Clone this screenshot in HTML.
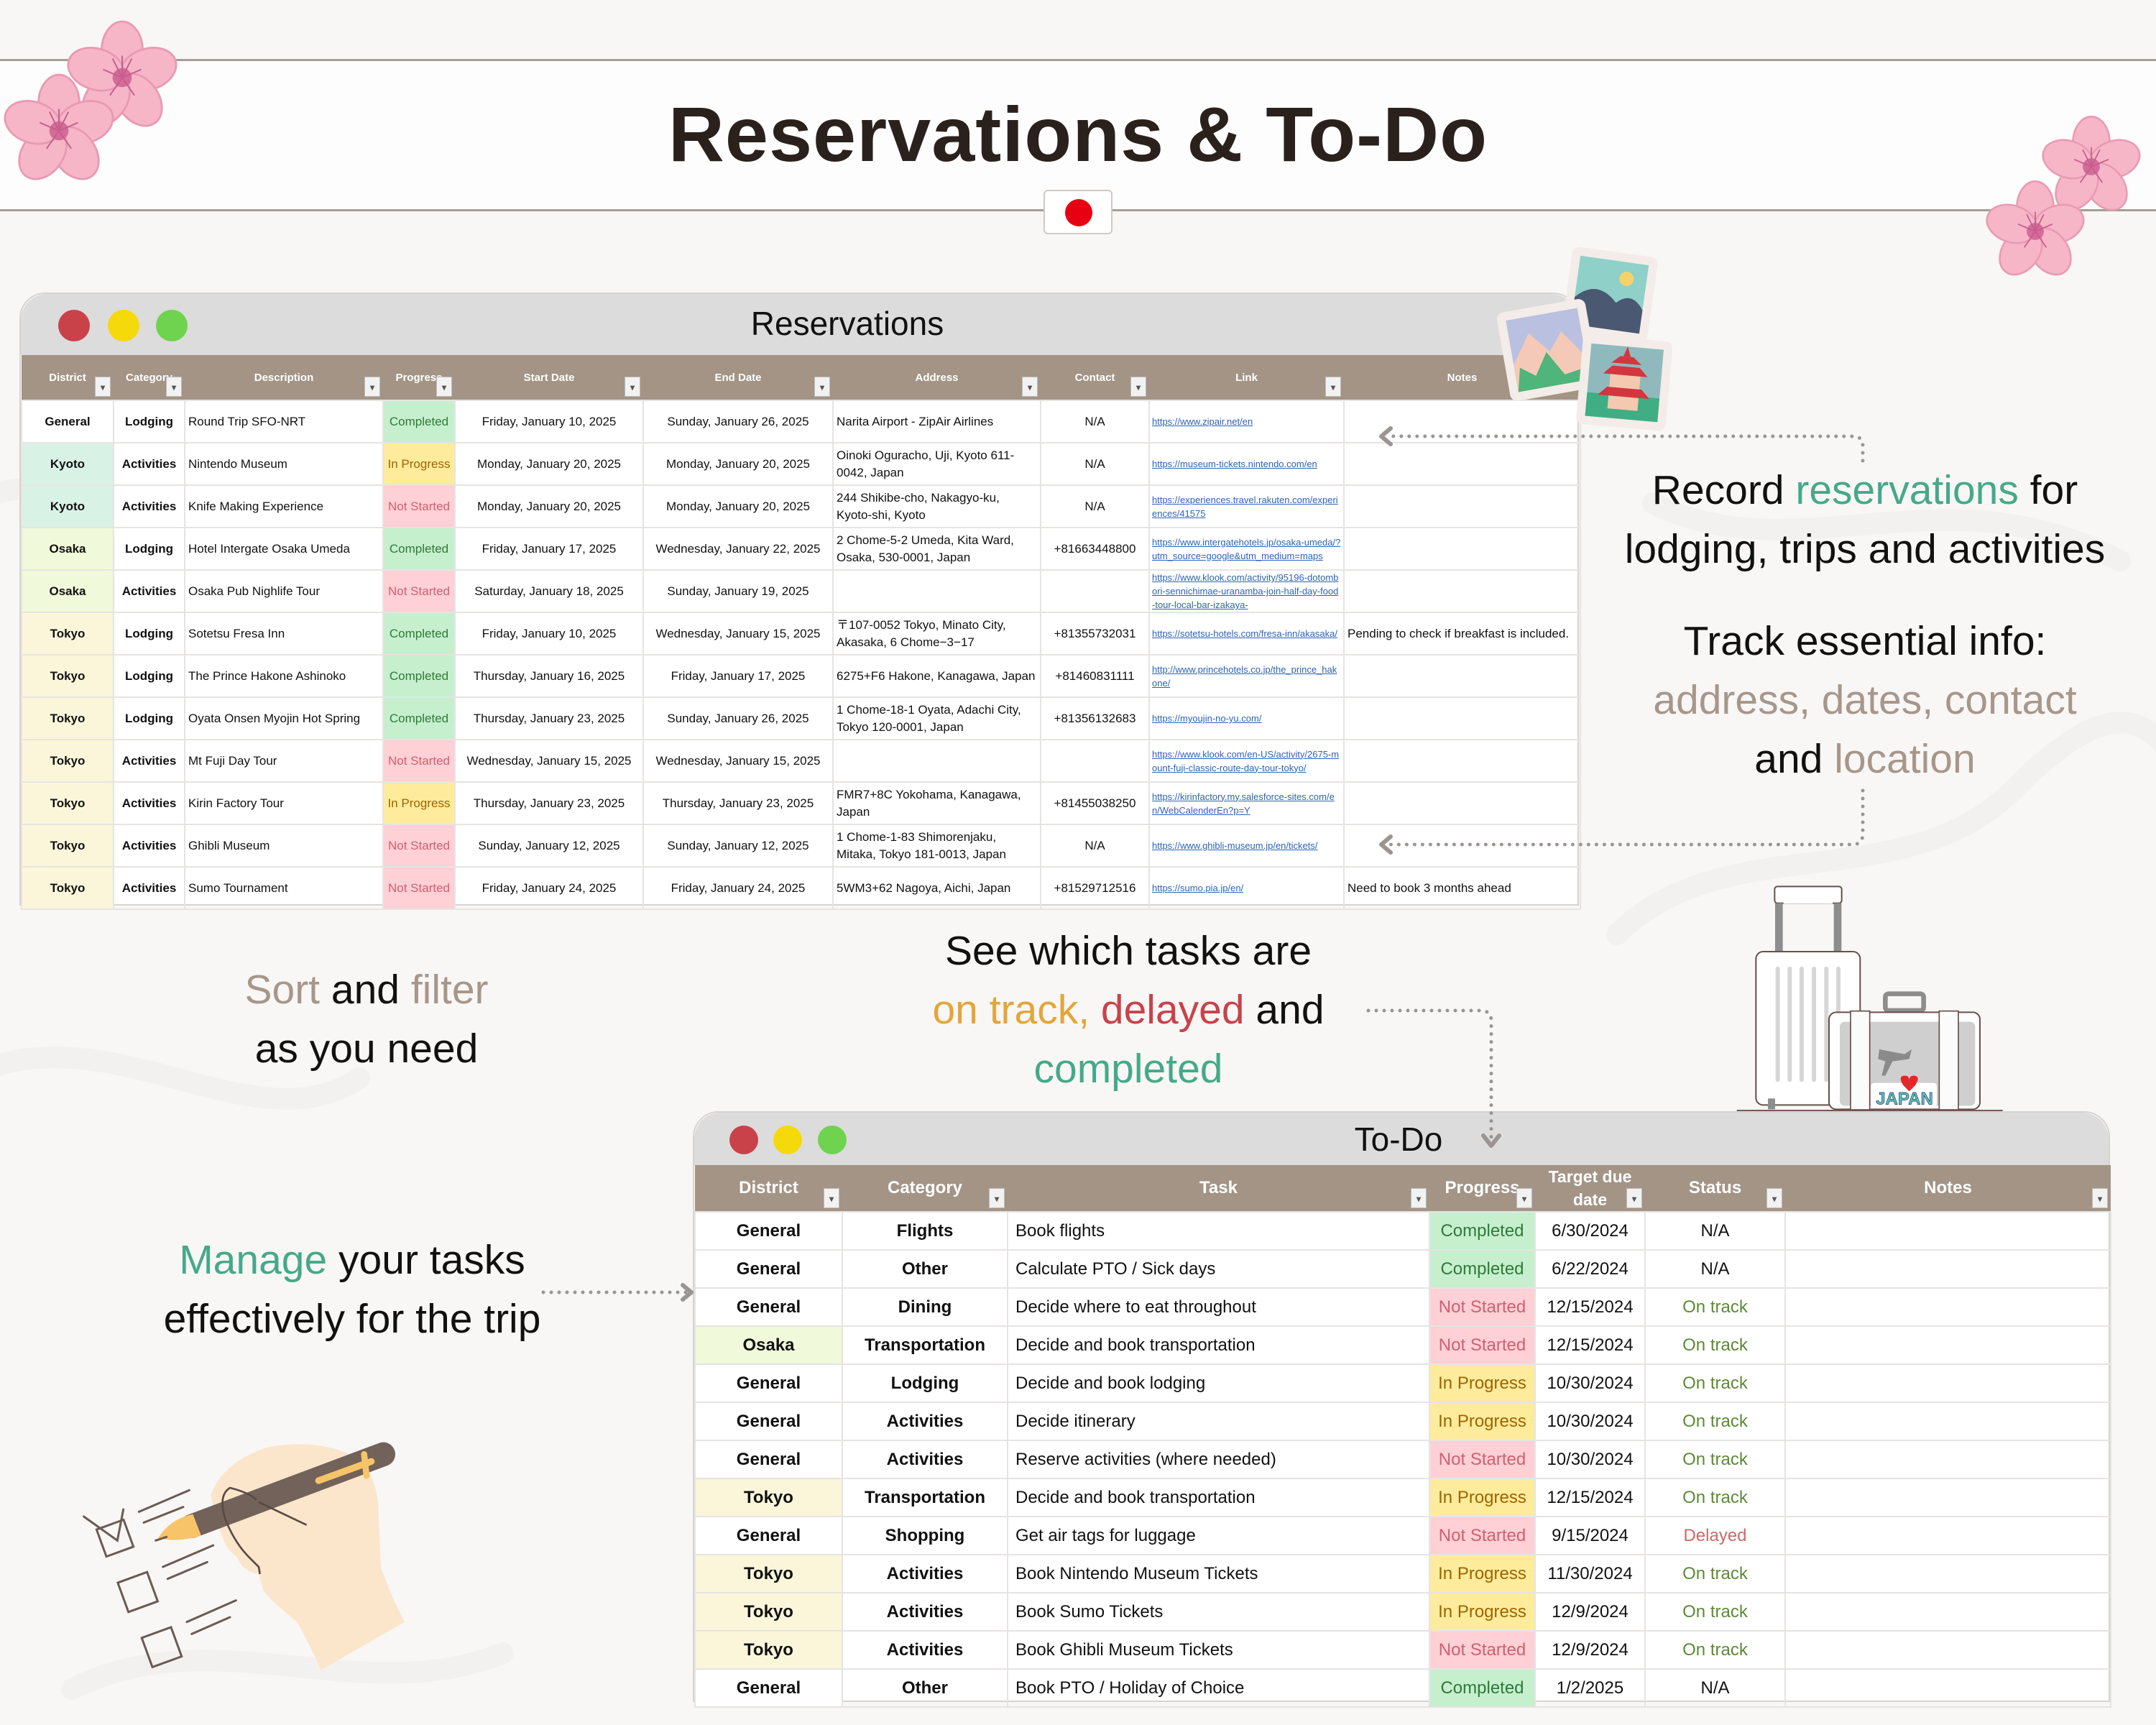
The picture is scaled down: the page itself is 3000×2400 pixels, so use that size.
<!DOCTYPE html>
<html><head><meta charset="utf-8">
<style>
*{margin:0;padding:0;box-sizing:border-box}
body{width:3000px;height:2400px;background:#f8f7f6;font-family:"Liberation Sans","Noto Sans CJK JP",sans-serif;position:relative;overflow:hidden;color:#111}
.band{position:absolute;left:0;top:82px;width:3000px;height:212px;background:#fdfdfd;border-top:3px solid #a59d97;border-bottom:3px solid #a59d97}
.title{position:absolute;left:0;width:3000px;top:124px;text-align:center;font-size:108px;font-weight:bold;color:#2a211d;letter-spacing:1px}
.flag{position:absolute;left:1452px;top:264px;width:96px;height:62px;background:#fff;border:2px solid #cfc8c3;border-radius:6px}
.flag:after{content:"";position:absolute;left:28px;top:11px;width:38px;height:38px;border-radius:50%;background:#e60012}
.win{position:absolute;background:#fff;border:2px solid #d6d3d0}
.bar{position:absolute;left:0;top:0;right:0;background:#dcdcdc;border-radius:36px 36px 0 0}
.dot{position:absolute;border-radius:50%}
.wt{position:absolute;font-weight:normal;color:#111;text-align:center}
table{border-collapse:collapse;table-layout:fixed;position:absolute}
th{background:#a39486;color:#fff;font-weight:bold;position:relative;text-align:center;vertical-align:middle}
th i{position:absolute;right:4px;bottom:4px;width:22px;height:28px;background:#f2f2f2;border:1px solid #bbb;color:#555;font-style:normal;font-size:12px;line-height:28px;text-align:center}
td{border:2px solid #e6e4e2;overflow:hidden;vertical-align:middle}
#res td{font-size:17px;line-height:24px;padding:0 4px}
#res td.c{text-align:center}
#res td.b{font-weight:bold;text-align:center}
#res td.l{font-size:13px;line-height:19px;color:#2d62b8;text-decoration:underline;word-break:break-all;padding:0 3px}
#todo td{font-size:24px;padding:0 10px}
#todo td.c{text-align:center}
#todo td.b{font-weight:bold;text-align:center}
.g{background:#fff}.ky{background:#d9f2e6}.os{background:#f0f9d9}.tk{background:#fbf6da}
.cm{background:#c6efce;color:#2f7a38;text-align:center;padding:0 !important}
.ip{background:#ffeb9c;color:#9c6500;text-align:center;padding:0 !important}
.ns{background:#ffd0d6;color:#d0606e;text-align:center;padding:0 !important}
.ot{color:#5d8a35}.dl{color:#c86a6a}
.txt{position:absolute;text-align:center;font-size:57px;line-height:82px;color:#111}
.gr{color:#45a98a}.tn{color:#a8968a}.yl{color:#e3a63a}.rd{color:#c9424a}
</style></head><body>

<svg width="3000" height="2400" style="position:absolute;left:0;top:0" viewBox="0 0 3000 2400">
<g fill="none" stroke="#f0eeec" stroke-width="30" stroke-linecap="round" opacity="0.7">
<path d="M-50 700 C200 600 300 900 600 800 S900 600 1100 750"/>
<path d="M2250 1300 C2400 1150 2650 1250 2800 1100 S3000 1000 3050 1100"/>
<path d="M-50 1500 C150 1400 350 1600 500 1500"/>
<path d="M100 2350 C300 2250 500 2380 700 2300"/>
<path d="M2300 700 C2500 800 2700 650 2950 780"/>
</g>
</svg>

<div class="band"></div>
<div class="title">Reservations &amp; To-Do</div>
<div class="flag"></div>

<svg width="3000" height="420" style="position:absolute;left:0;top:0" viewBox="0 0 3000 420">
<defs>
<g id="fl">
<g fill="#f6b6c8" stroke="#e99ab2" stroke-width="3">
<ellipse cx="0" cy="-40" rx="30" ry="42"/>
<ellipse cx="0" cy="-40" rx="30" ry="42" transform="rotate(72)"/>
<ellipse cx="0" cy="-40" rx="30" ry="42" transform="rotate(144)"/>
<ellipse cx="0" cy="-40" rx="30" ry="42" transform="rotate(216)"/>
<ellipse cx="0" cy="-40" rx="30" ry="42" transform="rotate(288)"/>
</g>
<circle r="14" fill="#d46c9a"/>
<g stroke="#c45d8c" stroke-width="2"><path d="M0 0L0-32M0 0L28-12M0 0L18 26M0 0L-18 26M0 0L-28-12M0 0L14-28M0 0L-14-28"/></g>
</g>
</defs>
<use href="#fl" transform="translate(170,108) scale(0.95)"/>
<use href="#fl" transform="translate(82,182) scale(0.95)"/>
<use href="#fl" transform="translate(2910,232) scale(0.85)"/>
<use href="#fl" transform="translate(2832,322) scale(0.85)"/>
</svg>

<!-- Reservations window -->
<div class="win" style="left:27px;top:407px;width:2170px;height:853px;border-radius:36px 36px 0 0">
<div class="bar" style="height:85px"></div>
<div class="dot" style="left:52px;top:22px;width:44px;height:44px;background:#c9424a"></div>
<div class="dot" style="left:121px;top:22px;width:44px;height:44px;background:#f5d90a"></div>
<div class="dot" style="left:188px;top:22px;width:44px;height:44px;background:#6fd34f"></div>
<div class="wt" style="left:850px;width:600px;top:14px;font-size:46px">Reservations</div>
<table id="res" style="left:0;top:85px;width:2169px">
<colgroup><col style="width:128px"><col style="width:99px"><col style="width:276px"><col style="width:100px"><col style="width:262px"><col style="width:264px"><col style="width:289px"><col style="width:151px"><col style="width:271px"><col style="width:329px"></colgroup>
<tr style="height:63px"><th style="font-size:15px">District<i>▾</i></th><th style="font-size:15px">Category<i>▾</i></th><th style="font-size:15px">Description<i>▾</i></th><th style="font-size:15px">Progress<i>▾</i></th><th style="font-size:15px">Start Date<i>▾</i></th><th style="font-size:15px">End Date<i>▾</i></th><th style="font-size:15px">Address<i>▾</i></th><th style="font-size:15px">Contact<i>▾</i></th><th style="font-size:15px">Link<i>▾</i></th><th style="font-size:15px">Notes</th></tr>
<tr style="height:59px"><td class="b g">General</td><td class="b">Lodging</td><td>Round Trip SFO-NRT</td><td class="cm">Completed</td><td class="c">Friday, January 10, 2025</td><td class="c">Sunday, January 26, 2025</td><td>Narita Airport - ZipAir Airlines</td><td class="c">N/A</td><td class="l">https://www.zipair.net/en</td><td></td></tr>
<tr style="height:59px"><td class="b ky">Kyoto</td><td class="b">Activities</td><td>Nintendo Museum</td><td class="ip">In Progress</td><td class="c">Monday, January 20, 2025</td><td class="c">Monday, January 20, 2025</td><td>Oinoki Oguracho, Uji, Kyoto 611-0042, Japan</td><td class="c">N/A</td><td class="l">https://museum-tickets.nintendo.com/en</td><td></td></tr>
<tr style="height:59px"><td class="b ky">Kyoto</td><td class="b">Activities</td><td>Knife Making Experience</td><td class="ns">Not Started</td><td class="c">Monday, January 20, 2025</td><td class="c">Monday, January 20, 2025</td><td>244 Shikibe-cho, Nakagyo-ku, Kyoto-shi, Kyoto</td><td class="c">N/A</td><td class="l">https://experiences.travel.rakuten.com/experiences/41575</td><td></td></tr>
<tr style="height:59px"><td class="b os">Osaka</td><td class="b">Lodging</td><td>Hotel Intergate Osaka Umeda</td><td class="cm">Completed</td><td class="c">Friday, January 17, 2025</td><td class="c">Wednesday, January 22, 2025</td><td>2 Chome-5-2 Umeda, Kita Ward, Osaka, 530-0001, Japan</td><td class="c">+81663448800</td><td class="l">https://www.intergatehotels.jp/osaka-umeda/?utm_source=google&amp;utm_medium=maps</td><td></td></tr>
<tr style="height:59px"><td class="b os">Osaka</td><td class="b">Activities</td><td>Osaka Pub Nighlife Tour</td><td class="ns">Not Started</td><td class="c">Saturday, January 18, 2025</td><td class="c">Sunday, January 19, 2025</td><td></td><td></td><td class="l"><div style="height:57px;overflow:hidden">https://www.klook.com/activity/95196-dotombori-sennichimae-uranamba-join-half-day-food-tour-local-bar-izakaya-</div></td><td></td></tr>
<tr style="height:59px"><td class="b tk">Tokyo</td><td class="b">Lodging</td><td>Sotetsu Fresa Inn</td><td class="cm">Completed</td><td class="c">Friday, January 10, 2025</td><td class="c">Wednesday, January 15, 2025</td><td>〒107-0052 Tokyo, Minato City, Akasaka, 6 Chome−3−17</td><td class="c">+81355732031</td><td class="l">https://sotetsu-hotels.com/fresa-inn/akasaka/</td><td>Pending to check if breakfast is included.</td></tr>
<tr style="height:59px"><td class="b tk">Tokyo</td><td class="b">Lodging</td><td>The Prince Hakone Ashinoko</td><td class="cm">Completed</td><td class="c">Thursday, January 16, 2025</td><td class="c">Friday, January 17, 2025</td><td>6275+F6 Hakone, Kanagawa, Japan</td><td class="c">+81460831111</td><td class="l">http://www.princehotels.co.jp/the_prince_hakone/</td><td></td></tr>
<tr style="height:59px"><td class="b tk">Tokyo</td><td class="b">Lodging</td><td>Oyata Onsen Myojin Hot Spring</td><td class="cm">Completed</td><td class="c">Thursday, January 23, 2025</td><td class="c">Sunday, January 26, 2025</td><td>1 Chome-18-1 Oyata, Adachi City, Tokyo 120-0001, Japan</td><td class="c">+81356132683</td><td class="l">https://myoujin-no-yu.com/</td><td></td></tr>
<tr style="height:59px"><td class="b tk">Tokyo</td><td class="b">Activities</td><td>Mt Fuji Day Tour</td><td class="ns">Not Started</td><td class="c">Wednesday, January 15, 2025</td><td class="c">Wednesday, January 15, 2025</td><td></td><td></td><td class="l">https://www.klook.com/en-US/activity/2675-mount-fuji-classic-route-day-tour-tokyo/</td><td></td></tr>
<tr style="height:59px"><td class="b tk">Tokyo</td><td class="b">Activities</td><td>Kirin Factory Tour</td><td class="ip">In Progress</td><td class="c">Thursday, January 23, 2025</td><td class="c">Thursday, January 23, 2025</td><td>FMR7+8C Yokohama, Kanagawa, Japan</td><td class="c">+81455038250</td><td class="l">https://kirinfactory.my.salesforce-sites.com/en/WebCalenderEn?p=Y</td><td></td></tr>
<tr style="height:59px"><td class="b tk">Tokyo</td><td class="b">Activities</td><td>Ghibli Museum</td><td class="ns">Not Started</td><td class="c">Sunday, January 12, 2025</td><td class="c">Sunday, January 12, 2025</td><td>1 Chome-1-83 Shimorenjaku, Mitaka, Tokyo 181-0013, Japan</td><td class="c">N/A</td><td class="l">https://www.ghibli-museum.jp/en/tickets/</td><td></td></tr>
<tr style="height:59px"><td class="b tk">Tokyo</td><td class="b">Activities</td><td>Sumo Tournament</td><td class="ns">Not Started</td><td class="c">Friday, January 24, 2025</td><td class="c">Friday, January 24, 2025</td><td>5WM3+62 Nagoya, Aichi, Japan</td><td class="c">+81529712516</td><td class="l">https://sumo.pia.jp/en/</td><td>Need to book 3 months ahead</td></tr>
</table>
</div>

<!-- picture frames -->
<svg width="260" height="260" style="position:absolute;left:2080px;top:340px" viewBox="0 0 260 260">
<g transform="rotate(8 160 70)"><rect x="100" y="10" width="120" height="120" rx="10" fill="#f4ece8"/><rect x="112" y="22" width="96" height="96" fill="#8fd0c8"/><path d="M112 118 L112 80 Q140 50 170 80 Q190 60 208 85 L208 118Z" fill="#4b5872"/><circle cx="180" cy="45" r="10" fill="#f5d36a"/></g>
<g transform="rotate(-10 70 140)"><rect x="10" y="85" width="125" height="125" rx="10" fill="#f4ece8"/><rect x="22" y="97" width="101" height="101" fill="#b9c0e0"/><path d="M22 198 L22 160 L50 120 L75 150 L95 125 L123 165 L123 198Z" fill="#f4c9b8"/><path d="M22 198 L30 165 L50 180 L70 150 L90 185 L123 180 L123 198Z" fill="#4fb57a"/></g>
<g transform="rotate(5 180 190)"><rect x="118" y="130" width="125" height="125" rx="10" fill="#f4ece8"/><rect x="130" y="142" width="101" height="101" fill="#8fb9bd"/><rect x="130" y="210" width="101" height="33" fill="#3fae84"/><rect x="160" y="180" width="42" height="50" fill="#f4c9b0"/><path d="M150 182 L212 182 L200 170 L162 170Z" fill="#d2363e"/><path d="M160 166 L202 166 L190 156 L172 156Z" fill="#d2363e"/><path d="M176 156 L181 142 L186 156Z" fill="#d2363e"/><path d="M145 212 L217 212 L205 200 L157 200Z" fill="#d2363e"/></g>
</svg>

<!-- To-Do window -->
<div class="win" style="left:964px;top:1546px;width:1972px;height:822px;border-radius:36px 36px 0 0">
<div class="bar" style="height:73px"></div>
<div class="dot" style="left:49px;top:18px;width:40px;height:40px;background:#c9424a"></div>
<div class="dot" style="left:110px;top:18px;width:40px;height:40px;background:#f5d90a"></div>
<div class="dot" style="left:172px;top:18px;width:40px;height:40px;background:#6fd34f"></div>
<div class="wt" style="left:860px;width:240px;top:10px;font-size:46px">To-Do</div>
<table id="todo" style="left:0;top:73px;width:1970px">
<colgroup><col style="width:205px"><col style="width:230px"><col style="width:587px"><col style="width:147px"><col style="width:153px"><col style="width:195px"><col style="width:453px"></colgroup>
<tr style="height:63px"><th style="font-size:24px">District<i>▾</i></th><th style="font-size:24px">Category<i>▾</i></th><th style="font-size:24px">Task<i>▾</i></th><th style="font-size:24px">Progress<i>▾</i></th><th style="font-size:23px;line-height:32px">Target due date<i>▾</i></th><th style="font-size:24px">Status<i>▾</i></th><th style="font-size:24px">Notes<i>▾</i></th></tr>
<tr style="height:53px"><td class="b g">General</td><td class="b">Flights</td><td>Book flights</td><td class="cm">Completed</td><td class="c">6/30/2024</td><td class="c">N/A</td><td></td></tr>
<tr style="height:53px"><td class="b g">General</td><td class="b">Other</td><td>Calculate PTO / Sick days</td><td class="cm">Completed</td><td class="c">6/22/2024</td><td class="c">N/A</td><td></td></tr>
<tr style="height:53px"><td class="b g">General</td><td class="b">Dining</td><td>Decide where to eat throughout</td><td class="ns">Not Started</td><td class="c">12/15/2024</td><td class="c ot">On track</td><td></td></tr>
<tr style="height:53px"><td class="b os">Osaka</td><td class="b">Transportation</td><td>Decide and book transportation</td><td class="ns">Not Started</td><td class="c">12/15/2024</td><td class="c ot">On track</td><td></td></tr>
<tr style="height:53px"><td class="b g">General</td><td class="b">Lodging</td><td>Decide and book lodging</td><td class="ip">In Progress</td><td class="c">10/30/2024</td><td class="c ot">On track</td><td></td></tr>
<tr style="height:53px"><td class="b g">General</td><td class="b">Activities</td><td>Decide itinerary</td><td class="ip">In Progress</td><td class="c">10/30/2024</td><td class="c ot">On track</td><td></td></tr>
<tr style="height:53px"><td class="b g">General</td><td class="b">Activities</td><td>Reserve activities (where needed)</td><td class="ns">Not Started</td><td class="c">10/30/2024</td><td class="c ot">On track</td><td></td></tr>
<tr style="height:53px"><td class="b tk">Tokyo</td><td class="b">Transportation</td><td>Decide and book transportation</td><td class="ip">In Progress</td><td class="c">12/15/2024</td><td class="c ot">On track</td><td></td></tr>
<tr style="height:53px"><td class="b g">General</td><td class="b">Shopping</td><td>Get air tags for luggage</td><td class="ns">Not Started</td><td class="c">9/15/2024</td><td class="c dl">Delayed</td><td></td></tr>
<tr style="height:53px"><td class="b tk">Tokyo</td><td class="b">Activities</td><td>Book Nintendo Museum Tickets</td><td class="ip">In Progress</td><td class="c">11/30/2024</td><td class="c ot">On track</td><td></td></tr>
<tr style="height:53px"><td class="b tk">Tokyo</td><td class="b">Activities</td><td>Book Sumo Tickets</td><td class="ip">In Progress</td><td class="c">12/9/2024</td><td class="c ot">On track</td><td></td></tr>
<tr style="height:53px"><td class="b tk">Tokyo</td><td class="b">Activities</td><td>Book Ghibli Museum Tickets</td><td class="ns">Not Started</td><td class="c">12/9/2024</td><td class="c ot">On track</td><td></td></tr>
<tr style="height:53px"><td class="b g">General</td><td class="b">Other</td><td>Book PTO / Holiday of Choice</td><td class="cm">Completed</td><td class="c">1/2/2025</td><td class="c">N/A</td><td></td></tr>
</table>
</div>

<!-- text blocks -->
<div class="txt" style="left:2160px;width:870px;top:641px">Record <span class="gr">reservations</span> for<br>lodging, trips and activities</div>
<div class="txt" style="left:2160px;width:870px;top:851px">Track essential info:<br><span class="tn">address, dates, contact</span><br>and <span class="tn">location</span></div>
<div class="txt" style="left:200px;width:620px;top:1336px"><span class="tn">Sort</span> and <span class="tn">filter</span><br>as you need</div>
<div class="txt" style="left:1170px;width:800px;top:1282px">See which tasks are<br><span class="yl">on track,</span> <span class="rd">delayed</span> and<br><span class="gr">completed</span></div>
<div class="txt" style="left:120px;width:740px;top:1712px"><span class="gr">Manage</span> your tasks<br>effectively for the trip</div>

<!-- dotted arrows -->
<svg width="3000" height="2400" style="position:absolute;left:0;top:0" viewBox="0 0 3000 2400" fill="none" stroke="#9a9593" stroke-linecap="round">
<g stroke-width="5" stroke-dasharray="0 11">
<path d="M2592 641 L2592 620 Q2592 607 2578 607 L1935 607"/>
<path d="M2592 1100 L2592 1160 Q2592 1175 2578 1175 L1935 1175"/>
<path d="M1904 1406 L2060 1406 Q2075 1406 2075 1420 L2075 1585"/>
<path d="M756 1798 L955 1798"/>
</g>
<g stroke-width="6" stroke-linejoin="round">
<path d="M1935 596 L1922 607 L1935 618"/>
<path d="M1935 1164 L1922 1175 L1935 1186"/>
<path d="M2064 1580 L2075 1594 L2086 1580"/>
<path d="M950 1788 L962 1798 L950 1808"/>
</g>
</svg>

<!-- luggage -->
<svg width="450" height="340" style="position:absolute;left:2380px;top:1220px" viewBox="0 0 1350 1020">
<line x1="110" y1="975" x2="1220" y2="975" stroke="#7a5a55" stroke-width="6"/>
<rect x="268" y="40" width="280" height="70" rx="12" fill="#fff" stroke="#6b4e4a" stroke-width="6"/>
<rect x="305" y="72" width="205" height="40" fill="#fff"/>
<rect x="270" y="110" width="32" height="210" fill="#8d8d8d"/><rect x="515" y="110" width="32" height="210" fill="#8d8d8d"/>
<rect x="190" y="312" width="435" height="640" rx="30" fill="#fff" stroke="#6b4e4a" stroke-width="6"/>
<g fill="#d6d6d6"><rect x="272" y="375" width="18" height="480" rx="8"/><rect x="322" y="375" width="18" height="480" rx="8"/><rect x="372" y="375" width="18" height="480" rx="8"/><rect x="423" y="375" width="18" height="480" rx="8"/><rect x="475" y="375" width="18" height="480" rx="8"/><rect x="525" y="375" width="18" height="480" rx="8"/></g>
<rect x="240" y="925" width="30" height="45" fill="#8d8d8d"/>
<rect x="730" y="488" width="160" height="70" rx="14" fill="none" stroke="#8d8d8d" stroke-width="20"/>
<rect x="495" y="565" width="630" height="405" rx="30" fill="#fff" stroke="#6b4e4a" stroke-width="6"/>
<rect x="540" y="605" width="565" height="350" rx="20" fill="#cfcfcf"/>
<path d="M705 720 L810 740 L840 720 L830 760 L760 770 L730 830 L715 830 L730 770 L700 760Z" fill="#8a8a8a"/>
<rect x="585" y="560" width="80" height="412" fill="#fbfbfb" stroke="#6b4e4a" stroke-width="5"/>
<rect x="955" y="560" width="80" height="412" fill="#fbfbfb" stroke="#6b4e4a" stroke-width="5"/>
<rect x="670" y="860" width="275" height="100" rx="14" fill="#fff"/>
<path d="M805 870 Q780 830 812 830 Q830 830 830 850 Q830 830 848 830 Q880 830 855 870 L830 895Z" fill="#e3262b"/>
<text x="810" y="950" text-anchor="middle" font-family="Liberation Sans,sans-serif" font-weight="bold" font-size="72" fill="#5cc2c0" stroke="#235" stroke-width="2">JAPAN</text>
</svg>

<!-- hand with pen -->
<svg width="520" height="360" style="position:absolute;left:80px;top:1980px" viewBox="0 0 1560 1080">
<path d="M640 300 Q690 160 880 100 Q1100 60 1260 150 Q1340 230 1340 380 L1350 600 Q1390 720 1450 830 L1100 1030 Q1040 900 1000 830 Q900 750 860 700 L840 630 Q770 620 750 560 Q700 520 690 480 Q660 400 640 300Z" fill="#fbe6cc"/>
<line x1="560" y1="430" x2="1360" y2="130" stroke="#726259" stroke-width="100" stroke-linecap="round"/>
<path d="M565 380 Q470 400 420 480 Q500 500 600 470Z" fill="#f7c46a"/>
<line x1="1090" y1="240" x2="1310" y2="160" stroke="#f7c46a" stroke-width="28" stroke-linecap="round"/>
<line x1="1280" y1="130" x2="1290" y2="220" stroke="#f7c46a" stroke-width="26" stroke-linecap="round"/>
<path d="M830 320 Q800 290 720 270 Q670 300 700 400 Q740 500 800 560 L840 600 L845 630" fill="none" stroke="#5a4a44" stroke-width="8"/>
<line x1="840" y1="330" x2="1040" y2="425" stroke="#5a4a44" stroke-width="8"/>
<g fill="none" stroke="#6b5a54" stroke-width="9" stroke-linecap="round">
<rect x="180" y="420" width="120" height="120" transform="rotate(-20 240 480)"/>
<path d="M110 390 L250 490 L275 360"/>
<rect x="270" y="640" width="130" height="130" transform="rotate(-20 335 705)"/>
<rect x="370" y="870" width="130" height="130" transform="rotate(-20 435 935)"/>
<path d="M340 370 L550 280 M360 415 L525 350 M410 490 L455 475 M440 600 L650 510 M460 650 L625 580 M540 830 L745 740 M560 880 L720 810"/>
</g>
</svg>

</body></html>
